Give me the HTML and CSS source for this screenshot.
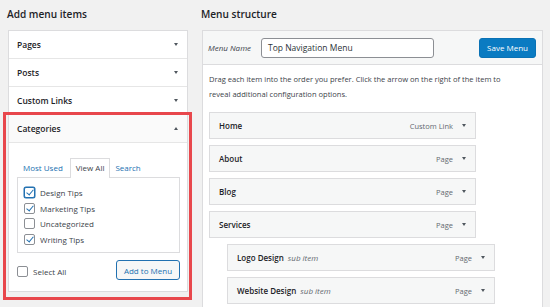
FILE: index.html
```html
<!DOCTYPE html>
<html lang="en">
<head>
<meta charset="utf-8">
<title>Menus</title>
<link rel="stylesheet" href="styles.css">
</head>
<body>
<div class="page">
  <section class="col-left">
    <h2 class="heading">Add menu items</h2>
    <div class="accordion">
      <div class="acc-item"><span>Pages</span><i class="arrow down"></i></div>
      <div class="acc-item"><span>Posts</span><i class="arrow down"></i></div>
      <div class="acc-item"><span>Custom Links</span><i class="arrow down"></i></div>
      <div class="acc-open">
        <div class="acc-item open"><span>Categories</span><i class="arrow up"></i></div>
        <div class="acc-body">
          <ul class="tabs">
            <li class="tab">Most Used</li>
            <li class="tab active">View All</li>
            <li class="tab">Search</li>
          </ul>
          <div class="tab-panel">
            <label class="check-row"><span class="cb checked focus"></span>Design Tips</label>
            <label class="check-row"><span class="cb checked"></span>Marketing Tips</label>
            <label class="check-row"><span class="cb"></span>Uncategorized</label>
            <label class="check-row"><span class="cb checked"></span>Writing Tips</label>
          </div>
          <div class="actions">
            <label class="check-row select-all"><span class="cb"></span>Select All</label>
            <button class="btn-secondary">Add to Menu</button>
          </div>
        </div>
        <div class="highlight"></div>
      </div>
    </div>
  </section>

  <section class="col-right">
    <h2 class="heading">Menu structure</h2>
    <div class="menu-panel">
      <div class="menu-header">
        <span class="menu-label">Menu Name</span>
        <div class="menu-input">Top Navigation Menu</div>
        <button class="btn-primary">Save Menu</button>
      </div>
      <div class="menu-body">
        <p class="desc">Drag each item into the order you prefer. Click the arrow on the right of the item to<br>reveal additional configuration options.</p>
        <ul class="items">
          <li class="item"><span class="item-title">Home</span><span class="item-type">Custom Link</span><i class="arrow down"></i></li>
          <li class="item"><span class="item-title">About</span><span class="item-type">Page</span><i class="arrow down"></i></li>
          <li class="item"><span class="item-title">Blog</span><span class="item-type">Page</span><i class="arrow down"></i></li>
          <li class="item"><span class="item-title">Services</span><span class="item-type">Page</span><i class="arrow down"></i></li>
          <li class="item sub"><span class="item-title">Logo Design <em>sub item</em></span><span class="item-type">Page</span><i class="arrow down"></i></li>
          <li class="item sub"><span class="item-title">Website Design <em>sub item</em></span><span class="item-type">Page</span><i class="arrow down"></i></li>
        </ul>
      </div>
    </div>
  </section>
</div>
</body>
</html>
```

FILE: styles.css
```css
* { box-sizing: border-box; }

html, body {
  margin: 0;
  padding: 0;
  background: #f1f1f1;
  font-family: "Open Sans", "Noto Sans", sans-serif;
  color: #1d2327;
  overflow: hidden;
}

.page {
  display: flex;
  gap: 14px;
  padding: 6px 0 0 8px;
  height: 307px;
  overflow: hidden;
}

.heading {
  margin: 0 0 8px -1px;
  font-size: 10.1px;
  line-height: 16px;
  font-weight: 600;
  color: #1d2327;
}

/* ---------- left column ---------- */
.col-left { width: 180px; flex: none; }

.accordion {
  background: #fff;
  border: 1px solid #dcdcde;
}

.acc-item {
  height: 28px;
  display: flex;
  align-items: center;
  justify-content: space-between;
  padding: 0 9px 0 8px;
  border-bottom: 1px solid #e6e6e6;
  font-size: 8.5px;
  font-weight: 600;
  color: #1d2327;
}

.acc-item.open { background: #fafafa; }

.arrow {
  width: 0;
  height: 0;
  border-left: 2.5px solid transparent;
  border-right: 2.5px solid transparent;
}
.arrow.down { border-top: 3.5px solid #50575e; }
.arrow.up { border-bottom: 3.5px solid #50575e; }

.acc-open { position: relative; }

.acc-body {
  padding: 15px 7px 11px 8px;
}

.tabs {
  list-style: none;
  margin: 0;
  padding: 0 0 0 5px;
  display: flex;
  height: 19px;
  position: relative;
  z-index: 1;
}

.tab {
  font-size: 8px;
  color: #2271b1;
  line-height: 17px;
  padding: 0 5px 0 0;
  border: 1px solid transparent;
  border-bottom: none;
}
.tab + .tab { margin-left: 1px; }
.tab.active {
  color: #3c434a;
  background: #fff;
  border-color: #dcdcde;
  padding: 0 5px;
  height: 20px;
  margin-right: 3px;
}

.tab-panel {
  border: 1px solid #dcdcde;
  height: 76px;
  padding: 7px 6px 0;
}

.check-row {
  display: flex;
  align-items: center;
  gap: 5px;
  height: 15.5px;
  font-size: 8px;
  color: #3c434a;
}

.cb {
  width: 11px;
  height: 11px;
  flex: none;
  border: 1px solid #8c8f94;
  border-radius: 2px;
  background: #fff;
  position: relative;
}
.cb.focus {
  border: 1.5px solid #2271b1;
  box-shadow: 0 0 0 0.5px #2271b1;
}
.cb.checked::after {
  content: "";
  position: absolute;
  left: 3px;
  top: 0.5px;
  width: 3px;
  height: 6px;
  border-right: 1.6px solid #2271b1;
  border-bottom: 1.6px solid #2271b1;
  transform: rotate(40deg);
}
.cb.focus.checked::after { left: 2.6px; top: 0; }

.actions {
  margin-top: 7px;
  display: flex;
  align-items: center;
  justify-content: space-between;
  height: 20px;
}
.select-all { margin-left: 0; padding-top: 3px; }

.btn-secondary {
  height: 20px;
  width: 64px;
  padding: 0;
  font-family: inherit;
  font-size: 8px;
  color: #2271b1;
  background: #f6f7f7;
  border: 1px solid #2271b1;
  border-radius: 3px;
}

.highlight {
  position: absolute;
  top: -3px;
  left: -6px;
  right: -5px;
  bottom: -9px;
  border: 3px solid #e8474c;
  pointer-events: none;
}

/* ---------- right column ---------- */
.col-right { width: 341px; flex: none; }

.menu-panel {
  background: #fff;
  border: 1px solid #dcdcde;
  border-bottom: none;
  height: 277px;
  overflow: hidden;
}

.menu-header {
  height: 34px;
  background: #f6f7f7;
  border-bottom: 1px solid #dcdcde;
  display: flex;
  align-items: center;
  padding: 0 6px 0 5px;
}

.menu-label {
  font-size: 8px;
  font-style: italic;
  color: #3c434a;
  width: 53px;
}

.menu-input {
  width: 173px;
  height: 20px;
  border: 1px solid #8c8f94;
  border-radius: 3px;
  background: #fff;
  font-size: 8.5px;
  line-height: 18px;
  padding-left: 6px;
  color: #2c3338;
}

.btn-primary {
  margin-left: auto;
  width: 57px;
  height: 20px;
  padding: 0;
  font-family: inherit;
  font-size: 8px;
  color: #fff;
  background: #0a7bc2;
  border: 1px solid #0a72b5;
  border-radius: 3px;
}

.menu-body { padding: 7px 6px 0; }

.desc {
  margin: 0 0 10px;
  font-size: 7.55px;
  line-height: 15px;
  color: #3c434a;
}

.items { list-style: none; margin: 0; padding: 0; }

.item {
  width: 267px;
  height: 27px;
  margin-bottom: 6px;
  display: flex;
  align-items: center;
  padding: 0 9px 0 9px;
  background: #f6f7f7;
  border: 1px solid #dcdcde;
}
.item:last-child { margin-bottom: 0; }
.item.sub { margin-left: 18px; width: 268px; }

.item-title {
  font-size: 8px;
  font-weight: 600;
  color: #1d2327;
  flex: 1;
}
.item-title em {
  font-weight: 400;
  color: #646970;
  margin-left: 2px;
}

.item-type {
  font-size: 7.5px;
  color: #646970;
  margin-right: 9px;
}
```
